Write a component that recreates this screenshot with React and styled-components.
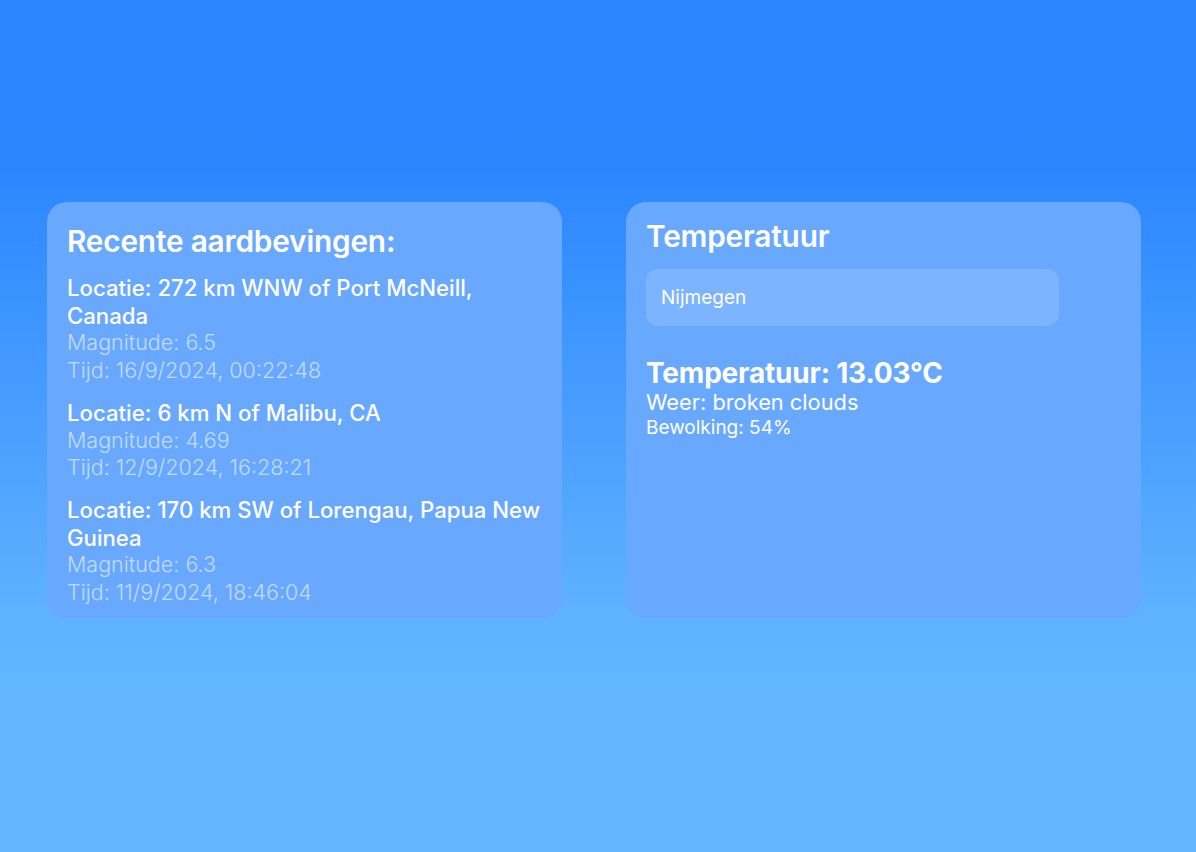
import React from "react";
import styled, { createGlobalStyle } from "styled-components";

const GlobalStyle = createGlobalStyle`
  html, body {
    margin: 0;
    padding: 0;
  }
  body {
    font-family: Inter, "Noto Sans", sans-serif;
    color: #fff;
  }
  * {
    box-sizing: border-box;
  }
`;

const Page = styled.div`
  min-height: 852px;
  background: linear-gradient(180deg, #2b85ff 0%, #2c87ff 20%, #4a9fff 50%, #5eb2ff 72%, #63b6ff 82%, #63b6ff 100%);
  padding: 202px 55px 0 47px;
  display: grid;
  grid-template-columns: 515px 515px;
  column-gap: 64px;
  align-items: start;
`;

const Card = styled.section`
  height: 416px;
  border-radius: 20px;
  background: #68a8ff;
  padding: 20px 20px 0 20px;
  overflow: hidden;
`;

const Title = styled.h2`
  margin: 0 0 ${props => props.$gap}px 0;
  font-size: 29.8px;
  font-weight: 600;
  line-height: ${props => props.$lh}px;
  letter-spacing: -0.2px;
`;

const Quake = styled.div`
  margin-bottom: 14px;
  font-size: 22.2px;
  line-height: 27.7px;
`;

const Place = styled.div`
  font-weight: 500;
`;

const Meta = styled.div`
  font-size: 21.5px;
  font-weight: 300;
  color: rgba(255, 255, 255, 0.6);
`;

const CityInput = styled.input`
  display: block;
  width: 413px;
  height: 57px;
  border: none;
  border-radius: 12px;
  background: rgba(255, 255, 255, 0.14);
  padding: 0 15px;
  font-family: Inter, "Noto Sans", sans-serif;
  font-size: 19px;
  color: #fff;
  outline: none;
`;

const Weather = styled.div`
  margin-top: 31px;
`;

const Temp = styled.div`
  font-size: 28px;
  font-weight: 700;
  line-height: 32px;
  letter-spacing: -0.2px;
`;

const Line = styled.div`
  font-size: ${props => props.$size}px;
  line-height: 26px;
  font-weight: 400;
`;

const quakes = [
  { place: "272 km WNW of Port McNeill, Canada", mag: "6.5", time: "16/9/2024, 00:22:48" },
  { place: "6 km N of Malibu, CA", mag: "4.69", time: "12/9/2024, 16:28:21" },
  { place: "170 km SW of Lorengau, Papua New Guinea", mag: "6.3", time: "11/9/2024, 18:46:04" },
];

export default function App() {
  return (
    <>
      <GlobalStyle />
      <Page>
        <Card>
          <Title $lh={38} $gap={14}>Recente aardbevingen:</Title>
          {quakes.map(q => (
            <Quake key={q.time}>
              <Place>Locatie: {q.place}</Place>
              <Meta>Magnitude: {q.mag}</Meta>
              <Meta>Tijd: {q.time}</Meta>
            </Quake>
          ))}
        </Card>
        <Card>
          <Title $lh={28} $gap={19}>Temperatuur</Title>
          <CityInput defaultValue="Nijmegen" />
          <Weather>
            <Temp>Temperatuur: 13.03°C</Temp>
            <Line $size={21.8}>Weer: broken clouds</Line>
            <Line $size={19}>Bewolking: 54%</Line>
          </Weather>
        </Card>
      </Page>
    </>
  );
}
